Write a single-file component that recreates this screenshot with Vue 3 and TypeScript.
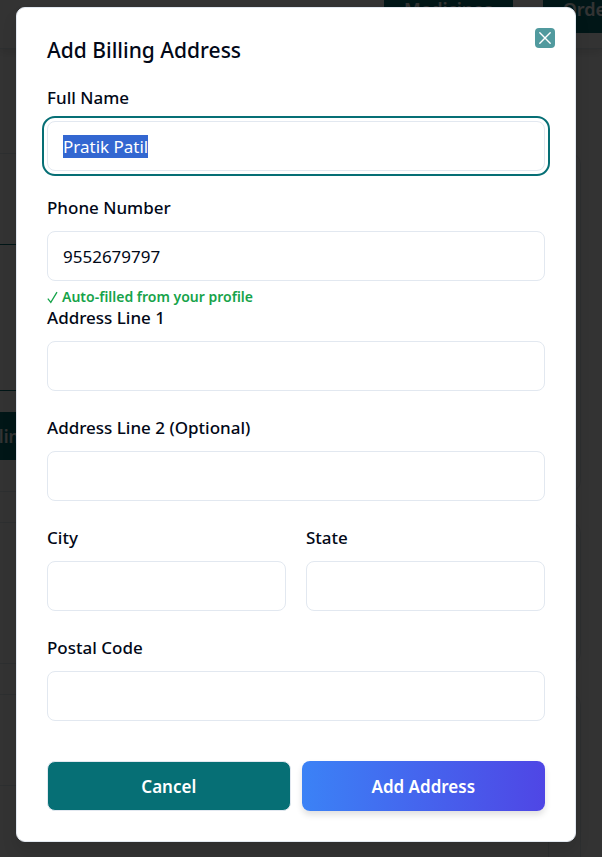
<script setup lang="ts">
import { onMounted, ref } from 'vue'

interface Field {
  id: string
  label: string
  value: string
  half?: boolean
  hint?: string
}

const fields = ref<Field[]>([
  { id: 'full-name', label: 'Full Name', value: 'Pratik Patil' },
  { id: 'phone', label: 'Phone Number', value: '9552679797', hint: 'Auto-filled from your profile' },
  { id: 'line-1', label: 'Address Line 1', value: '' },
  { id: 'line-2', label: 'Address Line 2 (Optional)', value: '' },
  { id: 'city', label: 'City', value: '', half: true },
  { id: 'state', label: 'State', value: '', half: true },
  { id: 'postal', label: 'Postal Code', value: '' },
])

const form = ref<HTMLFormElement | null>(null)

onMounted(() => {
  const first = form.value?.querySelector('input')
  first?.focus()
  first?.select()
})
</script>

<template>
  <div class="screen">
    <div class="page" aria-hidden="true">
      <header class="topbar">
        <span class="nav">Medicines</span>
        <span class="nav">Orders</span>
      </header>
      <div class="content">
        <section class="card summary">
          <div class="choice"></div>
          <div class="action">Add Billing</div>
        </section>
        <section class="card details"></section>
        <section class="card list"><div class="item"></div></section>
      </div>
    </div>

    <div class="overlay">
      <section class="dialog" role="dialog" aria-modal="true" aria-labelledby="dialog-title">
        <button class="close" type="button" aria-label="Close">
          <svg viewBox="0 0 20 20" width="20" height="20" fill="none" stroke="currentColor" stroke-width="1.4" stroke-linecap="round">
            <path d="M4.8 4.8 15.2 15.2M15.2 4.8 4.8 15.2" />
          </svg>
        </button>
        <h2 id="dialog-title">Add Billing Address</h2>
        <form ref="form" @submit.prevent>
          <div v-for="f in fields" :key="f.id" class="field" :class="{ half: f.half }">
            <label :for="f.id">{{ f.label }}</label>
            <input :id="f.id" v-model="f.value" type="text" autocomplete="off" />
            <p v-if="f.hint" class="hint">
              <svg viewBox="0 0 11 13" width="11" height="13" fill="none" stroke="currentColor" stroke-width="1.3">
                <path d="M.8 7.6 3.8 11.4 10 1.2" />
              </svg>
              {{ f.hint }}
            </p>
          </div>
          <div class="actions">
            <button class="btn cancel" type="button">Cancel</button>
            <button class="btn submit" type="submit">Add Address</button>
          </div>
        </form>
      </section>
    </div>
  </div>
</template>

<style>
body {
  margin: 0;
  background: #333;
}
</style>

<style scoped>
* {
  box-sizing: border-box;
}
.screen {
  position: relative;
  min-height: 100vh;
  overflow: hidden;
  color: #020817;
  font-family: "Segoe UI", "Noto Sans", "Open Sans", sans-serif;
  font-size: 17px;
}
.page {
  position: absolute;
  inset: 0;
  overflow: hidden;
  background: #fff;
}
.topbar {
  display: flex;
  align-items: flex-end;
  gap: 30px;
  height: 49px;
  padding: 0 0 15px 384px;
  border-bottom: 1px solid #e2e8f0;
  box-shadow: 0 4px 8px rgba(0, 0, 0, 0.1);
}
.nav {
  flex: none;
  height: 48px;
  padding: 0 20px;
  line-height: 48px;
  border-radius: 2px;
  background: #066f75;
  color: #fff;
  font-weight: 600;
  font-size: 18px;
}
.content {
  display: flex;
  flex-direction: column;
  gap: 30px;
  margin: 104px 21px 0 -40px;
}
.card {
  border: 1px solid #e2e8f0;
  border-radius: 11px;
}
.summary {
  height: 339px;
  padding: 90px 31px 0;
}
.choice {
  height: 147px;
  border: 1px solid #066f75;
}
.action {
  width: 200px;
  height: 48px;
  margin: 21px 0 0 -100px;
  padding-right: 62px;
  background: #066f75;
  color: #fff;
  font-weight: 600;
  line-height: 50px;
  text-align: right;
}
.details {
  height: 142px;
}
.list {
  height: 240px;
  padding: 90px 31px 0;
}
.item {
  height: 140px;
  border: 1px solid #e2e8f0;
}
.overlay {
  position: relative;
  padding: 7px 26px 15px 16px;
  background: rgba(0, 0, 0, 0.8);
  min-height: 100vh;
}
.dialog {
  position: relative;
  padding: 26px 30px 30px;
  border: 1px solid #e2e8f0;
  border-radius: 9px;
  background: #fff;
  box-shadow: 0 10px 15px rgba(0, 0, 0, 0.1);
}
.close {
  position: absolute;
  top: 20px;
  right: 20px;
  display: flex;
  width: 20px;
  height: 20px;
  padding: 0;
  border: 0;
  border-radius: 4px;
  background: #519a9e;
  color: #fff;
}
h2 {
  margin: 0;
  font-size: 21px;
  font-weight: 500;
  line-height: 32px;
}
form {
  display: grid;
  grid-template-columns: 1fr 1fr;
  column-gap: 20px;
  margin-top: 18px;
}
.field {
  grid-column: 1 / -1;
  height: 110px;
}
.field.half {
  grid-column: auto;
}
label {
  display: block;
  height: 27px;
  margin-bottom: 10px;
  font-weight: 500;
  line-height: 27px;
}
input {
  display: block;
  width: 100%;
  height: 50px;
  padding: 0 15px;
  border: 1px solid #e2e8f0;
  border-radius: 8px;
  background: #fff;
  color: inherit;
  font: inherit;
}
input:focus {
  outline: 2px solid #066f75;
  outline-offset: 3px;
}
input::selection {
  background: #3367d1;
  color: #fff;
}
.hint {
  display: flex;
  align-items: center;
  gap: 4px;
  margin: 6px 0 0;
  color: #16a34a;
  font-size: 14px;
  font-weight: 600;
  line-height: 20px;
}
.actions {
  grid-column: 1 / -1;
  display: grid;
  grid-template-columns: 1fr 1fr;
  gap: 11px;
  margin-top: 17px;
}
.btn {
  height: 50px;
  border: 1px solid transparent;
  border-radius: 8px;
  color: #fff;
  font: inherit;
  font-weight: 600;
}
.cancel {
  border-color: #e2e8f0;
  background: #066f75;
}
.submit {
  border: 0;
  background: linear-gradient(to right, #3b82f6, #4f46e5);
  box-shadow: 0 4px 6px rgba(0, 0, 0, 0.12);
}
</style>
